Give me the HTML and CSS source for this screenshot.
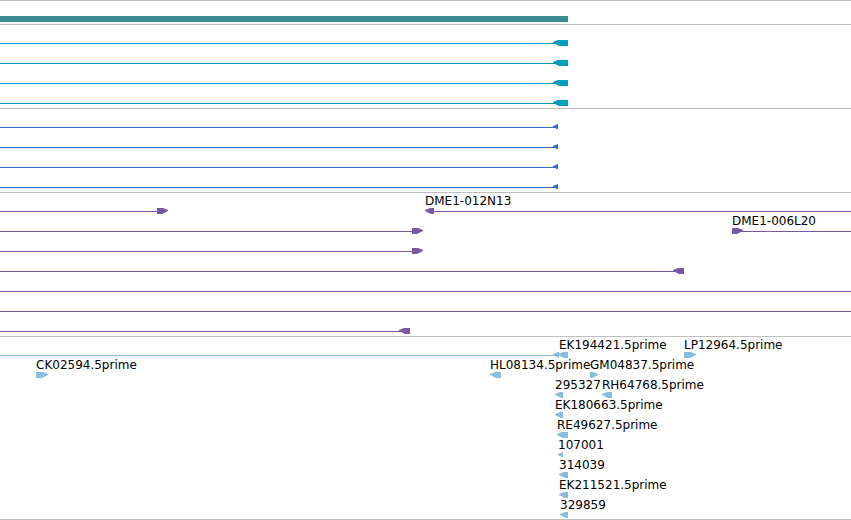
FILE: index.html
```
<!DOCTYPE HTML>
<html>
<head>
<meta charset="utf-8">
<title>Tracks</title>
<link rel="stylesheet" href="styles.css">
</head>

<body>
	<div class="tracks">
		<div class="track gene">
			<div class="row"><i class="bar" style="left:0;width:568px"></i></div>
		</div>
		<div class="track teal">
			<div class="row"><i class="line" style="left:0;width:555px"></i><i class="rev" style="left:553px;width:15px"></i></div>
			<div class="row"><i class="line" style="left:0;width:555px"></i><i class="rev" style="left:553px;width:15px"></i></div>
			<div class="row"><i class="line" style="left:0;width:555px"></i><i class="rev" style="left:553px;width:15px"></i></div>
			<div class="row"><i class="line" style="left:0;width:555px"></i><i class="rev" style="left:553px;width:15px"></i></div>
		</div>
		<div class="track blue">
			<div class="row"><i class="line" style="left:0;width:555px"></i><i class="rev" style="left:553px;width:5px"></i></div>
			<div class="row"><i class="line" style="left:0;width:555px"></i><i class="rev" style="left:553px;width:5px"></i></div>
			<div class="row"><i class="line" style="left:0;width:555px"></i><i class="rev" style="left:553px;width:5px"></i></div>
			<div class="row"><i class="line" style="left:0;width:555px"></i><i class="rev" style="left:553px;width:5px"></i></div>
		</div>
		<div class="track purple">
			<div class="row">
				<i class="line" style="left:0;width:157px"></i><i class="fwd" style="left:157px;width:11px"></i>
				<span class="name" style="left:425px">DME1-012N13</span>
				<i class="rev" style="left:425px;width:9px"></i><i class="line" style="left:434px;right:0"></i>
			</div>
			<div class="row">
				<i class="line" style="left:0;width:412px"></i><i class="fwd" style="left:412px;width:11px"></i>
				<span class="name" style="left:732px">DME1-006L20</span>
				<i class="fwd" style="left:732px;width:11px"></i><i class="line" style="left:741px;right:0"></i>
			</div>
			<div class="row"><i class="line" style="left:0;width:412px"></i><i class="fwd" style="left:412px;width:11px"></i></div>
			<div class="row"><i class="line" style="left:0;width:676px"></i><i class="rev" style="left:673px;width:11px"></i></div>
			<div class="row"><i class="line" style="left:0;right:0"></i></div>
			<div class="row"><i class="line" style="left:0;right:0"></i></div>
			<div class="row"><i class="line" style="left:0;width:401px"></i><i class="rev" style="left:399px;width:11px"></i></div>
		</div>
		<div class="track est">
			<div class="row">
				<i class="line" style="left:0;width:555px"></i><i class="rev" style="left:553px;width:6px"></i>
				<span class="name" style="left:559px">EK194421.5prime</span><i class="rev" style="left:558px;width:10px"></i>
				<span class="name" style="left:684px">LP12964.5prime</span><i class="fwd" style="left:684px;width:12px"></i>
			</div>
			<div class="row">
				<span class="name" style="left:36px">CK02594.5prime</span><i class="fwd" style="left:36px;width:12px"></i>
				<span class="name" style="left:490px">HL08134.5prime</span><i class="rev" style="left:490px;width:11px"></i>
				<span class="name" style="left:590px">GM04837.5prime</span><i class="fwd" style="left:590px;width:8px"></i>
			</div>
			<div class="row">
				<span class="name" style="left:555px">295327</span><i class="rev" style="left:555px;width:8px"></i>
				<span class="name" style="left:602px">RH64768.5prime</span><i class="rev" style="left:602px;width:10px"></i>
			</div>
			<div class="row"><span class="name" style="left:555px">EK180663.5prime</span><i class="rev" style="left:555px;width:8px"></i></div>
			<div class="row"><span class="name" style="left:557px">RE49627.5prime</span><i class="rev" style="left:557px;width:11px"></i></div>
			<div class="row"><span class="name" style="left:558px">107001</span><i class="rev" style="left:558px;width:5px"></i></div>
			<div class="row"><span class="name" style="left:559px">314039</span><i class="rev" style="left:559px;width:9px"></i></div>
			<div class="row"><span class="name" style="left:559px">EK211521.5prime</span><i class="rev" style="left:559px;width:9px"></i></div>
			<div class="row"><span class="name" style="left:560px">329859</span><i class="rev" style="left:560px;width:8px"></i></div>
		</div>
	</div>
</body>
</html>
```
FILE: styles.css
```
* {margin:0; padding:0; box-sizing:border-box;}
body{background:#fff; color:#000; font:12px/14px "DejaVu Sans", sans-serif;}
.tracks{overflow:hidden; border-bottom:1px solid #bebebe;}
.track{border-top:1px solid #bebebe; padding:1px 0 2px;}
.track:last-child{padding-bottom:1px;}
.row{height:20px; position:relative;}

/* features sit at their sequence coordinate */
.row i, .name{position:absolute;}
.name{top:0; white-space:nowrap;}
.bar, .rev, .fwd{top:14px; height:6px; background:currentColor;}
.line{top:17px; height:1px; background:currentColor;}
.rev{clip-path:polygon(0 2px, 5px 0, 100% 0, 100% 100%, 6px 100%, 0 3px);}
.fwd{clip-path:polygon(0 0, calc(100% - 5px) 0, 100% 2px, 100% 3px, calc(100% - 6px) 100%, 0 100%);}

.gene i{color:#3c8c91;}
.teal i{color:#009dbf;}
.blue i{color:#306dce;}
.purple i{color:#7658a6;}
.est i{color:#88bddf;}
```
